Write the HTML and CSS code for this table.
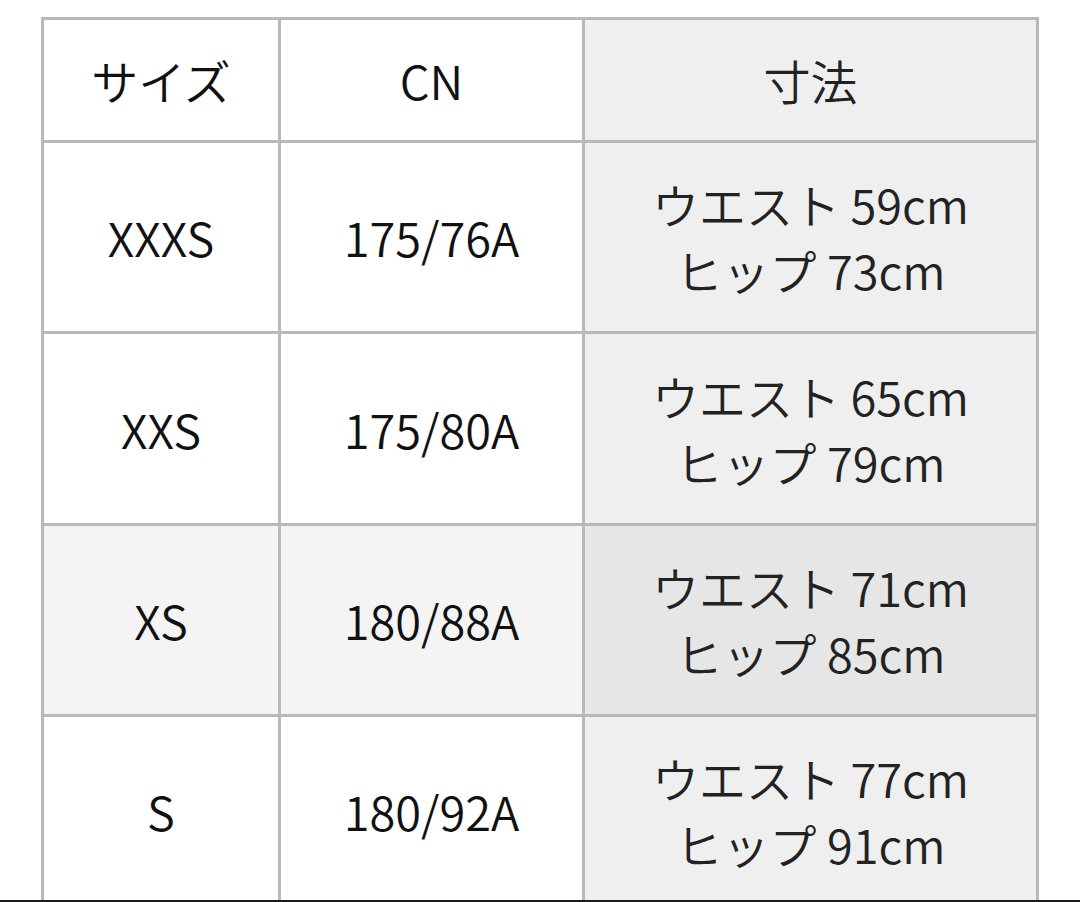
FILE: index.html
```html
<!DOCTYPE html>
<html lang="ja">
<head>
<meta charset="utf-8">
<link rel="stylesheet" href="styles.css">
</head>
<body>
<div class="page">
  <div class="chart">
    <div class="cell">サイズ</div>
    <div class="cell">CN</div>
    <div class="cell dim">寸法</div>

    <div class="cell">XXXS</div>
    <div class="cell">175/76A</div>
    <div class="cell dim"><span>ウエスト 59cm</span><span>ヒップ 73cm</span></div>

    <div class="cell">XXS</div>
    <div class="cell">175/80A</div>
    <div class="cell dim"><span>ウエスト 65cm</span><span>ヒップ 79cm</span></div>

    <div class="cell alt">XS</div>
    <div class="cell alt">180/88A</div>
    <div class="cell dim alt-dim"><span>ウエスト 71cm</span><span>ヒップ 85cm</span></div>

    <div class="cell">S</div>
    <div class="cell">180/92A</div>
    <div class="cell dim"><span>ウエスト 77cm</span><span>ヒップ 91cm</span></div>
  </div>
</div>
<div class="edge"></div>
</body>
</html>
```
FILE: styles.css
```css
html, body {
  margin: 0;
  padding: 0;
  background: #ffffff;
  overflow: hidden;
}
body {
  font-family: "Noto Sans CJK JP", "Noto Sans", sans-serif;
  color: #111111;
}
.page {
  padding: 17px 0 0 41px;
}
.chart {
  display: grid;
  width: 998px;
  box-sizing: border-box;
  grid-template-columns: 234px 301px 451px;
  grid-template-rows: 120px 188px 189px 188px 188px;
  gap: 3px;
  padding: 3px;
  background: #b9b9b9;
}
.cell {
  background: #ffffff;
  display: flex;
  flex-direction: column;
  align-items: center;
  justify-content: center;
  font-size: 47px;
  font-weight: 350;
  line-height: 66px;
  text-align: center;
}
.dim {
  background: #efefef;
  color: #222222;
}
.alt {
  background: #f4f4f4;
}
.alt-dim {
  background: #e6e6e6;
}
.edge {
  position: fixed;
  left: 0;
  right: 0;
  bottom: 0;
  height: 2px;
  background: #1a1a1a;
}
```
